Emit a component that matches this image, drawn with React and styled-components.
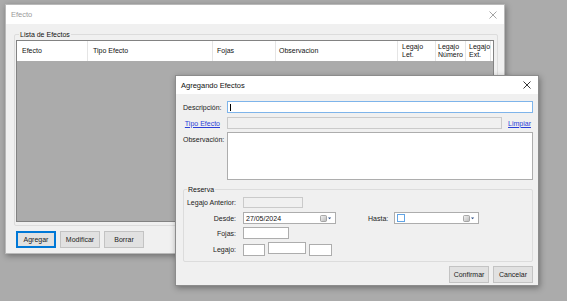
import React from "react";
import styled, { createGlobalStyle } from "styled-components";

const Global = createGlobalStyle`
  html, body { margin: 0; padding: 0; background: #ababab; }
  body { font-family: "Liberation Sans", Arial, sans-serif; font-size: 7px; color: #111; }
  * { box-sizing: border-box; }
`;

const Desktop = styled.div`
  position: relative;
  width: 567px;
  height: 301px;
  overflow: hidden;
  background: #ababab;
`;

const Window = styled.div`
  position: absolute;
  left: ${(p) => p.x}px;
  top: ${(p) => p.y}px;
  width: ${(p) => p.w}px;
  height: ${(p) => p.h}px;
  display: flex;
  flex-direction: column;
  background: #f0f0f0;
  border: 1px solid ${(p) => (p.active ? "#8c8c8c" : "#b9b9b9")};
  box-shadow: 1px 2px 6px rgba(0, 0, 0, 0.35);
`;

const TitleBar = styled.div`
  height: ${(p) => p.h}px;
  flex: none;
  display: flex;
  align-items: center;
  justify-content: space-between;
  padding: 0 7px 0 5px;
  background: #fff;
  font-size: 7.5px;
  color: ${(p) => (p.active ? "#111" : "#9a9a9a")};
`;

const Close = ({ color }) => (
  <svg width="8" height="8" viewBox="0 0 8 8">
    <path d="M0.5 0.5L7.5 7.5M7.5 0.5L0.5 7.5" stroke={color} strokeWidth="0.9" />
  </svg>
);

const OuterBody = styled.div`
  flex: 1;
  display: flex;
  flex-direction: column;
  padding: 6px 6px 0 8px;
`;

const Group = styled.fieldset`
  margin: ${(p) => p.m || 0};
  padding: ${(p) => p.pad};
  border: 1px solid #dcdcdc;
  border-radius: 2px;
  min-width: 0;
`;

const Legend = styled.legend`
  margin-left: 3px;
  padding: 0 1px;
  font-size: 7px;
  line-height: 9px;
`;

const ListView = styled.div`
  height: 182px;
  display: flex;
  flex-direction: column;
  background: #ababab;
  border: 1px solid #828282;
`;

const Header = styled.div`
  height: 20px;
  display: flex;
  background: #fff;
`;

const Col = styled.div`
  width: ${(p) => p.w}px;
  flex: none;
  display: flex;
  align-items: center;
  padding-left: ${(p) => p.pl ?? 5}px;
  border-right: 1px solid #e5e5e5;
  line-height: 8px;
  font-size: 7px;
`;

const HeaderFill = styled.div`
  flex: 1;
  background: #fff;
`;

const ButtonRow = styled.div`
  display: flex;
  gap: ${(p) => p.gap}px;
  margin-top: ${(p) => p.mt}px;
  padding-left: ${(p) => p.pl || 0}px;
  justify-content: ${(p) => (p.end ? "flex-end" : "flex-start")};
`;

const Button = styled.div`
  width: 40px;
  height: 17px;
  display: flex;
  align-items: center;
  justify-content: center;
  background: #e1e1e1;
  border: 1px solid ${(p) => (p.focus ? "#0078d7" : "#c3c3c3")};
  box-shadow: ${(p) => (p.focus ? "inset 0 0 0 1px #0078d7" : "none")};
  font-size: 7px;
  color: #222;
`;

const DialogBody = styled.div`
  flex: 1;
  display: flex;
  flex-direction: column;
  padding: 7px 5px 0 7px;
`;

const Row = styled.div`
  display: flex;
  align-items: ${(p) => (p.top ? "flex-start" : "center")};
  margin-top: ${(p) => p.mt || 0}px;
  height: ${(p) => p.h}px;
`;

const Label = styled.div`
  width: ${(p) => p.w}px;
  flex: none;
  margin-right: 7px;
  padding-top: ${(p) => p.pt || 0}px;
  text-align: right;
  font-size: 7px;
  color: #222;
`;

const Link = styled.span`
  color: #2a3fd8;
  text-decoration: underline;
`;

const Box = styled.div`
  position: relative;
  width: ${(p) => (p.w ? `${p.w}px` : "auto")};
  flex: ${(p) => (p.w ? "none" : 1)};
  height: ${(p) => p.h}px;
  align-self: ${(p) => p.self || "auto"};
  margin-top: ${(p) => p.mt || 0}px;
  background: ${(p) => (p.off ? "#f0f0f0" : "#fff")};
  border: 1px solid ${(p) => (p.focus ? "#7eb4ea" : p.off ? "#cacaca" : "#adadad")};
`;

const Caret = styled.div`
  position: absolute;
  left: 2px;
  top: 2px;
  width: 1px;
  height: 7px;
  background: #000;
`;

const LimpiarLink = styled(Link)`
  margin-left: 6px;
  margin-right: 2px;
  font-size: 7px;
`;

const Picker = styled.div`
  width: ${(p) => p.w}px;
  height: 12px;
  flex: none;
  display: flex;
  align-items: center;
  padding: 0 3px 0 2px;
  background: #fff;
  border: 1px solid #adadad;
  font-size: 7px;
`;

const PickerText = styled.div`
  flex: 1;
  display: flex;
  align-items: center;
`;

const Check = styled.div`
  width: 8px;
  height: 8px;
  border: 1px solid #62a4e4;
  background: #fff;
`;

const CalIcon = () => (
  <svg width="12" height="7" viewBox="0 0 12 7">
    <defs>
      <linearGradient id="cg" x1="0" y1="0" x2="1" y2="1">
        <stop offset="0" stopColor="#f4f4f4" />
        <stop offset="1" stopColor="#b8b8b8" />
      </linearGradient>
    </defs>
    <rect x="0.5" y="0.5" width="6" height="6" rx="1" fill="url(#cg)" stroke="#8a8a8a" strokeWidth="0.7" />
    <path d="M8 2.5h3.2L9.6 4.3z" fill="#2f4f86" />
  </svg>
);

const HastaLabel = styled.div`
  margin: 0 6px 0 32px;
  font-size: 7px;
  color: #222;
`;

const LegajoBoxes = styled.div`
  display: flex;
  gap: 3px;
  height: 14px;
`;

export default function App() {
  return (
    <Desktop>
      <Global />
      <Window x={5} y={4} w={500} h={250}>
        <TitleBar h={19}>
          <span>Efecto</span>
          <Close color="#9a9a9a" />
        </TitleBar>
        <OuterBody>
          <Group pad="1px 3px 3px 1px">
            <Legend>Lista de Efectos</Legend>
            <ListView>
              <Header>
                <Col w={71}>Efecto</Col>
                <Col w={125}>Tipo Efecto</Col>
                <Col w={63} pl={4}>Fojas</Col>
                <Col w={122} pl={3}>Observacion</Col>
                <Col w={38} pl={4}>Legajo<br />Let.</Col>
                <Col w={30} pl={2}>Legajo<br />Número</Col>
                <Col w={25} pl={3}>Legajo<br />Ext.</Col>
                <HeaderFill />
              </Header>
            </ListView>
          </Group>
          <ButtonRow gap={4} mt={5} pl={2}>
            <Button focus>Agregar</Button>
            <Button>Modificar</Button>
            <Button>Borrar</Button>
          </ButtonRow>
        </OuterBody>
      </Window>

      <Window x={175} y={75} w={364} h={211} active>
        <TitleBar h={18} active>
          <span>Agregando Efectos</span>
          <Close color="#222" />
        </TitleBar>
        <DialogBody>
          <Row h={12}>
            <Label w={37}>Descripción:</Label>
            <Box h={12} focus>
              <Caret />
            </Box>
          </Row>
          <Row h={12} mt={4}>
            <Label w={37}>
              <Link>Tipo Efecto</Link>
            </Label>
            <Box h={12} off />
            <LimpiarLink>Limpiar</LimpiarLink>
          </Row>
          <Row h={48} mt={3} top>
            <Label w={37} pt={4}>Observación:</Label>
            <Box h={48} />
          </Row>
          <Group m="5px 0 0 0" pad="3px 0 5px 0">
            <Legend>Reserva</Legend>
            <Row h={11}>
              <Label w={52}>Legajo Anterior:</Label>
              <Box w={60} h={11} off />
            </Row>
            <Row h={12} mt={4}>
              <Label w={52}>Desde:</Label>
              <Picker w={93}>
                <PickerText>27/05/2024</PickerText>
                <CalIcon />
              </Picker>
              <HastaLabel>Hasta:</HastaLabel>
              <Picker w={85}>
                <PickerText>
                  <Check />
                </PickerText>
                <CalIcon />
              </Picker>
            </Row>
            <Row h={12} mt={3}>
              <Label w={52}>Fojas:</Label>
              <Box w={46} h={12} />
            </Row>
            <Row h={14} mt={3}>
              <Label w={52}>Legajo:</Label>
              <LegajoBoxes>
                <Box w={22} h={12} mt={2} />
                <Box w={38} h={12} />
                <Box w={23} h={12} mt={2} />
              </LegajoBoxes>
            </Row>
          </Group>
          <ButtonRow gap={4} mt={4} end>
            <Button>Confirmar</Button>
            <Button>Cancelar</Button>
          </ButtonRow>
        </DialogBody>
      </Window>
    </Desktop>
  );
}
